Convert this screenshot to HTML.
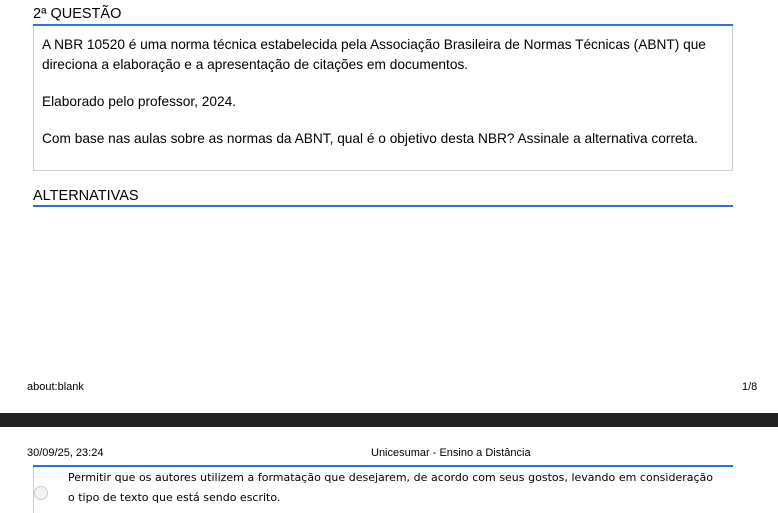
<!DOCTYPE html>
<html><head><meta charset="utf-8"><style>
body{margin:0;width:778px;height:513px;background:#fff;position:relative;overflow:hidden;font-family:"Liberation Sans",sans-serif;color:#000}
.a{position:absolute}
.h{left:33px;font-size:14.5px}
.q{left:33px;top:26px;width:698px;height:144px;border:1px solid #ccc;border-top:none}
.q p{margin:0;padding:0 8px;font-size:13.7px;line-height:20px}
</style></head><body>
<div class="a h" style="top:6px">2ª QUESTÃO</div>
<div class="a" style="left:33px;top:24px;width:700px;height:2px;background:#2872e0"></div>
<div class="a q">
<p style="margin-top:9px">A NBR 10520 é uma norma técnica estabelecida pela Associação Brasileira de Normas Técnicas (ABNT) que direciona a elaboração e a apresentação de citações em documentos.</p>
<p style="margin-top:17px">Elaborado pelo professor, 2024.</p>
<p style="margin-top:17px">Com base nas aulas sobre as normas da ABNT, qual é o objetivo desta NBR? Assinale a alternativa correta.</p>
</div>
<div class="a h" style="top:188px">ALTERNATIVAS</div>
<div class="a" style="left:33px;top:205px;width:700px;height:2px;background:#2872e0"></div>
<div class="a" style="left:27px;top:381px;font-size:11px">about:blank</div>
<div class="a" style="left:742px;top:381px;font-size:11px">1/8</div>
<div class="a" style="left:0;top:413px;width:778px;height:14px;background:#222"></div>
<div class="a" style="left:27px;top:447px;font-size:11px">30/09/25, 23:24</div>
<div class="a" style="left:371px;top:447px;font-size:11px">Unicesumar - Ensino a Distância</div>
<div class="a" style="left:33px;top:465px;width:700px;height:2px;background:#2872e0"></div>
<div class="a" style="left:33px;top:467px;width:1px;height:46px;background:#ccc"></div>
<div class="a" style="left:34px;top:486px;width:12px;height:12px;border:1px solid #ccc;border-radius:50%;background:#f4f4f4"></div>
<div class="a" style="left:68px;top:468px;width:645px;font-family:'DejaVu Sans',sans-serif;font-size:11px;line-height:20px;text-align:justify">Permitir que os autores utilizem a formatação que desejarem, de acordo com seus gostos, levando em consideração o tipo de texto que está sendo escrito.</div>
</body></html>
